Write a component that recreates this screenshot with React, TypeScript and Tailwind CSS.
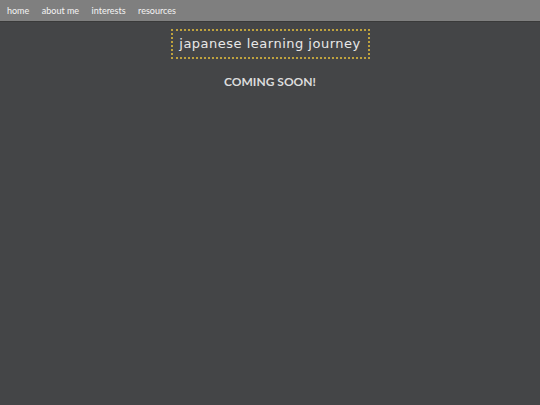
export default function App() {
  return (
    <div className="min-h-[405px] w-full bg-[#444547] font-['Lato',sans-serif]">
      <nav className="flex h-[22px] items-center gap-[12.5px] border-b border-[#3a3a3a] bg-[#7f7f7f] px-[7px] text-[9px] text-[#f4f4f4]">
        <a>home</a>
        <a>about me</a>
        <a>interests</a>
        <a>resources</a>
      </nav>
      <div className="flex flex-col items-center pt-[7px]">
        <h1 className="flex h-[30px] w-[199px] items-center justify-center border-2 border-dotted border-[#bfa23e] font-['DejaVu_Sans',sans-serif] text-[13px] tracking-[0.5px] text-[#e8e8e8]">
          japanese learning journey
        </h1>
        <p className="mt-[14px] text-[12px] font-bold text-[#dcdcdc]">COMING SOON!</p>
      </div>
    </div>
  );
}
